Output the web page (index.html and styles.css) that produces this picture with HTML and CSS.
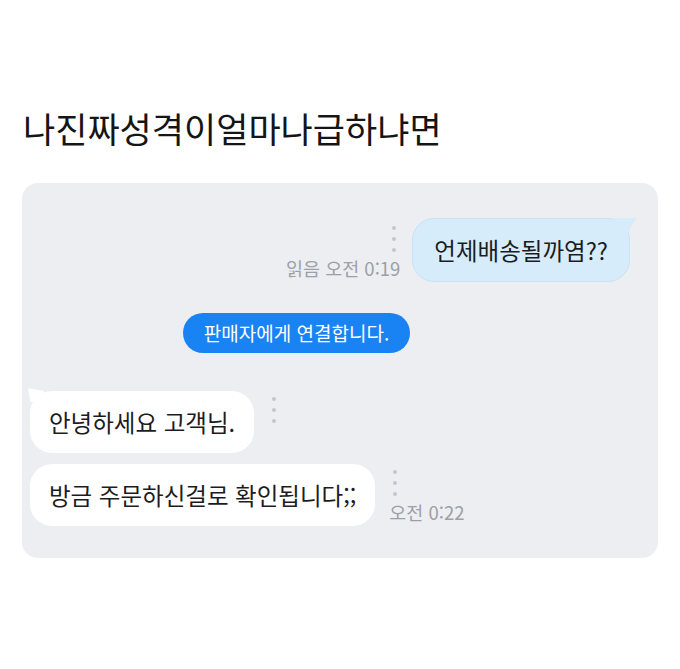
FILE: index.html
```html
<!DOCTYPE html>
<html lang="ko">
<head>
    <meta charset="UTF-8">
    <meta name="viewport" content="width=device-width, initial-scale=1.0">
    <title>나진짜성격이얼마나급하냐면</title>
    <link rel="stylesheet" href="styles.css">
</head>
<body>

    <h1 class="title">나진짜성격이얼마나급하냐면</h1>

    <div class="chat">
        <div class="row row-me">
            <div class="meta meta-me">
                <div class="dots"><span></span><span></span><span></span></div>
                <span class="time">읽음 오전 0:19</span>
            </div>
            <div class="bubble bubble-me">언제배송될까염??</div>
        </div>

        <div class="notice">판매자에게 연결합니다.</div>

        <div class="row row-them first">
            <div class="bubble bubble-them tail">안녕하세요 고객님.</div>
            <div class="meta meta-them">
                <div class="dots"><span></span><span></span><span></span></div>
            </div>
        </div>

        <div class="row row-them">
            <div class="bubble bubble-them">방금 주문하신걸로 확인됩니다;;</div>
            <div class="meta meta-them">
                <div class="dots"><span></span><span></span><span></span></div>
                <span class="time">오전 0:22</span>
            </div>
        </div>
    </div>

</body>
</html>
```

FILE: styles.css
```css
body {
    margin: 0;
    background: #ffffff;
    font-family: "Noto Sans CJK KR", "Noto Sans", sans-serif;
    color: #1c1c1e;
}
.title {
    margin: 0;
    padding: 108px 0 0 23px;
    font-size: 35px;
    line-height: 40px;
    font-weight: 400;
    color: #151515;
}
.chat {
    margin: 35px 22px 0;
    padding: 35px 28px 32px 8px;
    background: #eceef2;
    border-radius: 16px;
}
.row {
    display: flex;
}
.row-me {
    justify-content: flex-end;
    gap: 12px;
}
.row-them {
    margin-top: 11px;
    gap: 14px;
}
.row-them.first {
    margin-top: 38px;
}
.bubble {
    position: relative;
    padding: 18px 19px;
    font-size: 23.5px;
    line-height: 26px;
    border-radius: 22px;
}
.bubble-me {
    background: #d6ecfb;
    border: 1px solid #c9e2f4;
    padding: 18px 21px 18px 21px;
}
.bubble-me::after {
    content: "";
    position: absolute;
    top: -1px;
    right: -7px;
    width: 22px;
    height: 14px;
    background: #d6ecfb;
    clip-path: polygon(0 0, 100% 0, 66% 100%, 0 100%);
}
.bubble-them {
    background: #ffffff;
}
.bubble-them.tail::after {
    content: "";
    position: absolute;
    top: -3px;
    left: -2px;
    width: 16px;
    height: 14px;
    background: #ffffff;
    clip-path: polygon(0 0, 100% 22%, 100% 100%, 14% 100%);
}
.meta {
    display: flex;
    flex-direction: column;
    justify-content: space-between;
}
.meta-me {
    align-items: flex-end;
}
.meta-me .dots {
    margin: 8px 4px 0 0;
}
.meta-them {
    align-items: flex-start;
}
.meta-them .dots {
    margin: 6px 0 0 4px;
}
.dots {
    display: flex;
    flex-direction: column;
    gap: 7px;
}
.dots span {
    width: 4px;
    height: 4px;
    border-radius: 50%;
    background: #c3c6cb;
}
.time {
    font-size: 18.5px;
    line-height: 22px;
    color: #9ca0a6;
    white-space: nowrap;
    margin-bottom: 3px;
}
.notice {
    margin: 31px 0 0 153px;
    width: 227px;
    height: 40px;
    line-height: 40px;
    text-align: center;
    background: #1a83f3;
    color: #ffffff;
    font-size: 19px;
    border-radius: 20px;
}
```
